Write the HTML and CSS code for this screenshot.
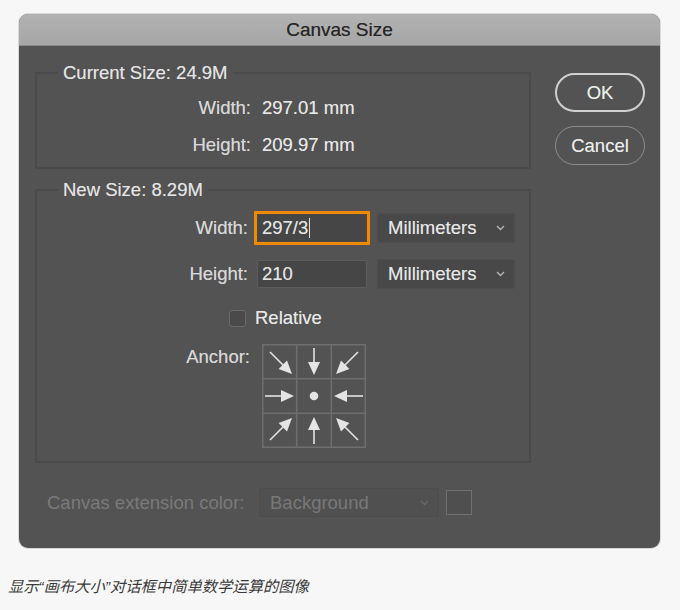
FILE: index.html
```html
<!DOCTYPE html>
<html>
<head>
<meta charset="utf-8">
<link rel="stylesheet" href="styles.css">
</head>
<body>
<div class="page">
  <div class="dialog">
    <div class="titlebar">Canvas Size</div>
    <div class="content">
      <div class="main">
        <fieldset class="group current">
          <legend>Current Size: 24.9M</legend>
          <div class="row info">
            <span class="label lbl-cur">Width:</span>
            <span class="value">297.01 mm</span>
          </div>
          <div class="row info second">
            <span class="label lbl-cur">Height:</span>
            <span class="value">209.97 mm</span>
          </div>
        </fieldset>
        <fieldset class="group newsize">
          <legend>New Size: 8.29M</legend>
          <div class="row field">
            <span class="label lbl-new">Width:</span>
            <div class="input focused">297/3<span class="caret"></span></div>
            <div class="select unit">Millimeters<svg class="chev" width="9" height="6" viewBox="0 0 9 6"><path d="M1 1 L4.5 4.5 L8 1" fill="none" stroke="#b8b8b8" stroke-width="1.3"/></svg></div>
          </div>
          <div class="row field second-field">
            <span class="label lbl-new">Height:</span>
            <div class="input">210</div>
            <div class="select unit">Millimeters<svg class="chev" width="9" height="6" viewBox="0 0 9 6"><path d="M1 1 L4.5 4.5 L8 1" fill="none" stroke="#b8b8b8" stroke-width="1.3"/></svg></div>
          </div>
          <div class="row relative">
            <span class="checkbox"></span>
            <span class="value">Relative</span>
          </div>
          <div class="row anchor">
            <span class="label lbl-anchor">Anchor:</span>
            <svg class="grid" width="104" height="104" viewBox="0 0 104 104">
              <g stroke="#6f6f6f" stroke-width="1.5" fill="none">
                <rect x="0.75" y="0.75" width="102.5" height="102.5"/>
                <line x1="34.67" y1="0" x2="34.67" y2="104"/>
                <line x1="69.33" y1="0" x2="69.33" y2="104"/>
                <line x1="0" y1="34.67" x2="104" y2="34.67"/>
                <line x1="0" y1="69.33" x2="104" y2="69.33"/>
              </g>
              <g stroke="#e4e4e4" stroke-width="1.6" fill="#e4e4e4">
                <line x1="8" y1="8" x2="22" y2="22"/>
                <polygon stroke="none" points="30,30 16.6,25 25,16.6"/>
                <line x1="52" y1="4" x2="52" y2="20"/>
                <polygon stroke="none" points="52,31 46,18 58,18"/>
                <line x1="96" y1="8" x2="82" y2="22"/>
                <polygon stroke="none" points="74,30 87.4,25 79,16.6"/>
                <line x1="3" y1="52" x2="21" y2="52"/>
                <polygon stroke="none" points="32,52 19,46 19,58"/>
                <circle stroke="none" cx="52" cy="52" r="4.3"/>
                <line x1="101" y1="52" x2="83" y2="52"/>
                <polygon stroke="none" points="72,52 85,46 85,58"/>
                <line x1="8" y1="96" x2="22" y2="82"/>
                <polygon stroke="none" points="30,74 16.6,79 25,87.4"/>
                <line x1="52" y1="100" x2="52" y2="84"/>
                <polygon stroke="none" points="52,73 46,86 58,86"/>
                <line x1="96" y1="96" x2="82" y2="82"/>
                <polygon stroke="none" points="74,74 87.4,79 79,87.4"/>
              </g>
            </svg>
          </div>
        </fieldset>
        <div class="row extension">
          <span class="ext-label">Canvas extension color:</span>
          <div class="select ext">Background<svg class="chev" width="9" height="6" viewBox="0 0 9 6"><path d="M1 1 L4.5 4.5 L8 1" fill="none" stroke="#6a6a6a" stroke-width="1.3"/></svg></div>
          <span class="swatch"></span>
        </div>
      </div>
      <div class="buttons">
        <div class="btn ok">OK</div>
        <div class="btn cancel">Cancel</div>
      </div>
    </div>
  </div>
  <p class="caption">显示“画布大小”对话框中简单数学运算的图像</p>
</div>
</body>
</html>
```

FILE: styles.css
```css
html, body {
  margin: 0;
  padding: 0;
  background: #f7f7f7;
}

.page {
  width: 680px;
  height: 610px;
  padding-top: 14px;
  box-sizing: border-box;
  font-family: "Liberation Sans", Arial, sans-serif;
  font-size: 18.5px;
}

.dialog {
  margin-left: 19px;
  width: 641px;
  height: 534px;
  background: #535353;
  border-radius: 9px;
  overflow: hidden;
  box-shadow: 0 0 0 1px rgba(0, 0, 0, 0.12);
  text-shadow: 0 0 0.6px rgba(255, 255, 255, 0.5);
}

.titlebar {
  height: 31px;
  line-height: 31px;
  text-align: center;
  background: linear-gradient(#b2b2b2, #a6a6a6);
  border-bottom: 1px solid #8a8a8a;
  color: #262626;
  font-size: 19px;
  text-shadow: 0 0 0.6px rgba(0, 0, 0, 0.5);
}

.content {
  display: flex;
  padding: 16px 0 0 16px;
}

.main {
  width: 496px;
}

.group {
  margin: 0;
  padding: 0;
  border: 2px solid #4a4a4a;
  min-width: 0;
}

.group legend {
  margin-left: 21px;
  padding: 0 5px;
  line-height: 22px;
  color: #e4e4e4;
}

.row {
  display: flex;
  align-items: center;
}

.label {
  text-align: right;
  color: #d8d8d8;
  line-height: 22px;
}

.value {
  color: #e8e8e8;
  line-height: 22px;
}

.current {
  padding-top: 13px;
  padding-bottom: 11px;
}

.info.second {
  margin-top: 15px;
}

.lbl-cur {
  width: 214px;
  margin-right: 11px;
}

.newsize {
  margin-top: 10px;
  padding-top: 12px;
  padding-bottom: 13px;
}

.lbl-new {
  width: 211px;
  margin-right: 9px;
}

.field {
  height: 30px;
}

.second-field {
  margin-top: 16px;
}

.input {
  width: 110px;
  height: 28px;
  box-sizing: border-box;
  background: #464646;
  border: 1px solid #5c5c5c;
  color: #e4e4e4;
  line-height: 26px;
  padding-left: 4px;
  display: flex;
  align-items: center;
}

.input.focused {
  border-color: #4a4a4a;
  box-shadow: 0 0 0 3px #f28a00;
}

.caret {
  display: inline-block;
  width: 1px;
  height: 20px;
  background: #e0e0e0;
  margin-left: 1px;
}

.select {
  box-sizing: border-box;
  height: 30px;
  background: #484848;
  border: 1px solid #4e4e4e;
  border-radius: 2px;
  display: flex;
  align-items: center;
  justify-content: space-between;
  padding: 0 9px 0 10px;
  color: #e6e6e6;
}

.unit {
  width: 138px;
  margin-left: 10px;
}

.chev {
  display: block;
}

.relative {
  margin-top: 18px;
  padding-left: 192px;
}

.checkbox {
  width: 17px;
  height: 17px;
  box-sizing: border-box;
  border: 1px solid #6a6a6a;
  border-radius: 3px;
  background: #4a4a4a;
  margin-right: 9px;
}

.anchor {
  margin-top: 15px;
  align-items: flex-start;
}

.lbl-anchor {
  width: 213px;
  margin-right: 12px;
  margin-top: 2px;
}

.grid {
  display: block;
}

.extension {
  margin-top: 25px;
  padding-left: 12px;
  text-shadow: none;
}

.ext-label {
  width: 201px;
  margin-right: 11px;
  color: #7a7a7a;
  line-height: 22px;
}

.ext {
  width: 180px;
  height: 29px;
  background: #505050;
  border-color: #4c4c4c;
  color: #787878;
}

.swatch {
  width: 26px;
  height: 25px;
  box-sizing: border-box;
  margin-left: 7px;
  border: 1px solid #707070;
  background: #4f4f4f;
}

.buttons {
  margin-left: 24px;
  margin-top: 11px;
  display: flex;
  flex-direction: column;
  gap: 14px;
}

.btn {
  width: 90px;
  height: 39px;
  box-sizing: border-box;
  border-radius: 20px;
  display: flex;
  align-items: center;
  justify-content: center;
  color: #ececec;
}

.ok {
  border: 2px solid #d0d0d0;
}

.cancel {
  border: 1.5px solid #8e8e8e;
}

.caption {
  margin: 27px 0 0 8px;
  font-family: "Liberation Sans", "Noto Sans CJK SC", sans-serif;
  font-style: italic;
  font-size: 15.3px;
  line-height: 24px;
  color: #3a3a3a;
}
```
